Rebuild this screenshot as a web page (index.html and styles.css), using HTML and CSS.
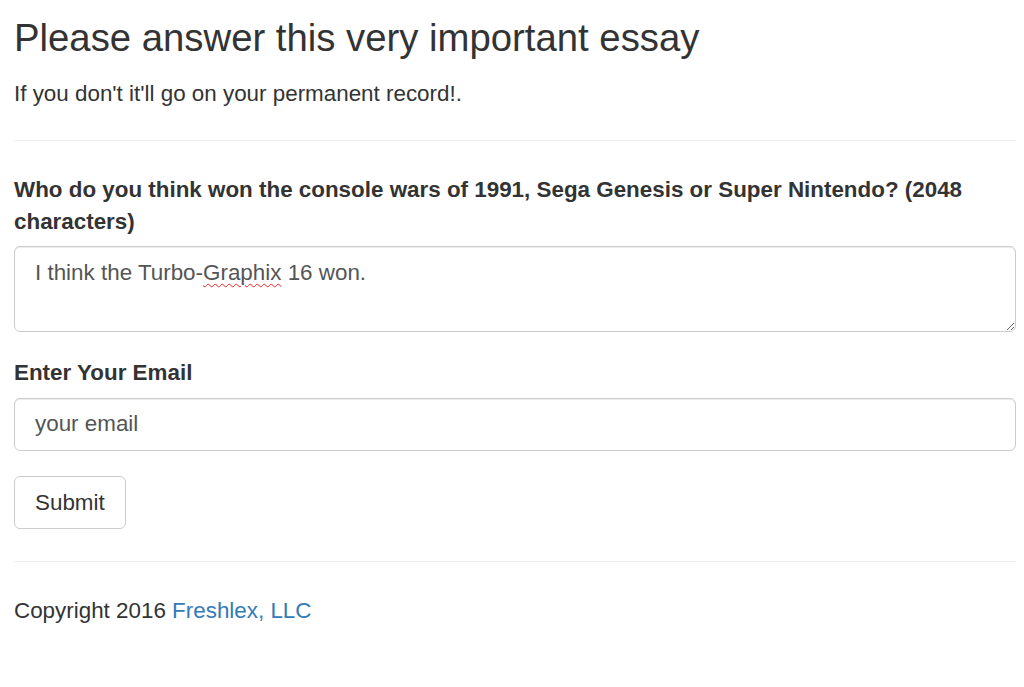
FILE: index.html
```html
<!DOCTYPE html>
<html lang="en">
<head>
<meta charset="utf-8">
<title>Essay</title>
<link rel="stylesheet" href="styles.css">
</head>
<body>
<div class="container">
  <h1 class="title">Please answer this very important essay</h1>
  <p class="lead">If you don't it'll go on your permanent record!.</p>
  <hr class="rule">
  <form class="essay-form">
    <div class="form-group">
      <label class="field-label">Who do you think won the console wars of 1991, Sega Genesis or Super Nintendo? (2048 characters)</label>
      <div class="form-control textarea" role="textbox" contenteditable="true">I think the Turbo-<span class="misspelled">Graphix</span> 16 won.</div>
    </div>
    <div class="form-group">
      <label class="field-label" for="email">Enter Your Email</label>
      <input class="form-control input" id="email" type="email" placeholder="your email">
    </div>
    <button class="btn" type="submit">Submit</button>
  </form>
  <hr class="rule rule-bottom">
  <footer class="footer">Copyright 2016 <a class="link" href="#">Freshlex, LLC</a></footer>
</div>
</body>
</html>
```

FILE: styles.css
```css
html, body {
  margin: 0;
  background: #fff;
}
body {
  font-family: "Liberation Sans", Arial, sans-serif;
  font-size: 22.4px;
  line-height: 1.4;
  color: #333;
}
.container {
  padding: 0 8px 0 14px;
}
.title {
  margin: 17px 0 19px;
  font-size: 38.3px;
  font-weight: 500;
  line-height: 1.1;
  color: #333;
}
.lead {
  margin: 0;
  font-size: 22.4px;
  font-weight: 300;
}
.rule {
  margin: 31px 0 0;
  border: 0;
  border-top: 1px solid #eee;
  height: 0;
}
.essay-form {
  padding-top: 33px;
}
.form-group {
  margin-bottom: 25px;
}
.field-label {
  display: block;
  margin-bottom: 9px;
  font-weight: bold;
}
.form-control {
  display: block;
  box-sizing: border-box;
  width: 100%;
  padding: 10px 20px;
  font-family: "Liberation Sans", Arial, sans-serif;
  font-size: 22.4px;
  line-height: 1.4;
  color: #555;
  background: #fff;
  border: 1px solid #ccc;
  border-radius: 6px;
  box-shadow: inset 0 1px 1px rgba(0, 0, 0, 0.075);
  outline: none;
}
.textarea {
  height: 86px;
  padding-top: 10px;
  overflow: auto;
  resize: vertical;
}
.misspelled {
  text-decoration: underline wavy #e22;
  text-decoration-thickness: 1px;
  text-underline-offset: 3px;
}
.input {
  height: 53px;
}
.input::placeholder {
  color: #555;
  opacity: 1;
}
.btn {
  display: inline-block;
  box-sizing: border-box;
  height: 53px;
  padding: 10px 20px;
  font-family: "Liberation Sans", Arial, sans-serif;
  font-size: 22.4px;
  line-height: 1.4;
  color: #333;
  background: #fff;
  border: 1px solid #ccc;
  border-radius: 6px;
  cursor: pointer;
}
.rule-bottom {
  margin-top: 32px;
}
.footer {
  padding-top: 33px;
}
.link {
  color: #337ab7;
  text-decoration: none;
}
```
